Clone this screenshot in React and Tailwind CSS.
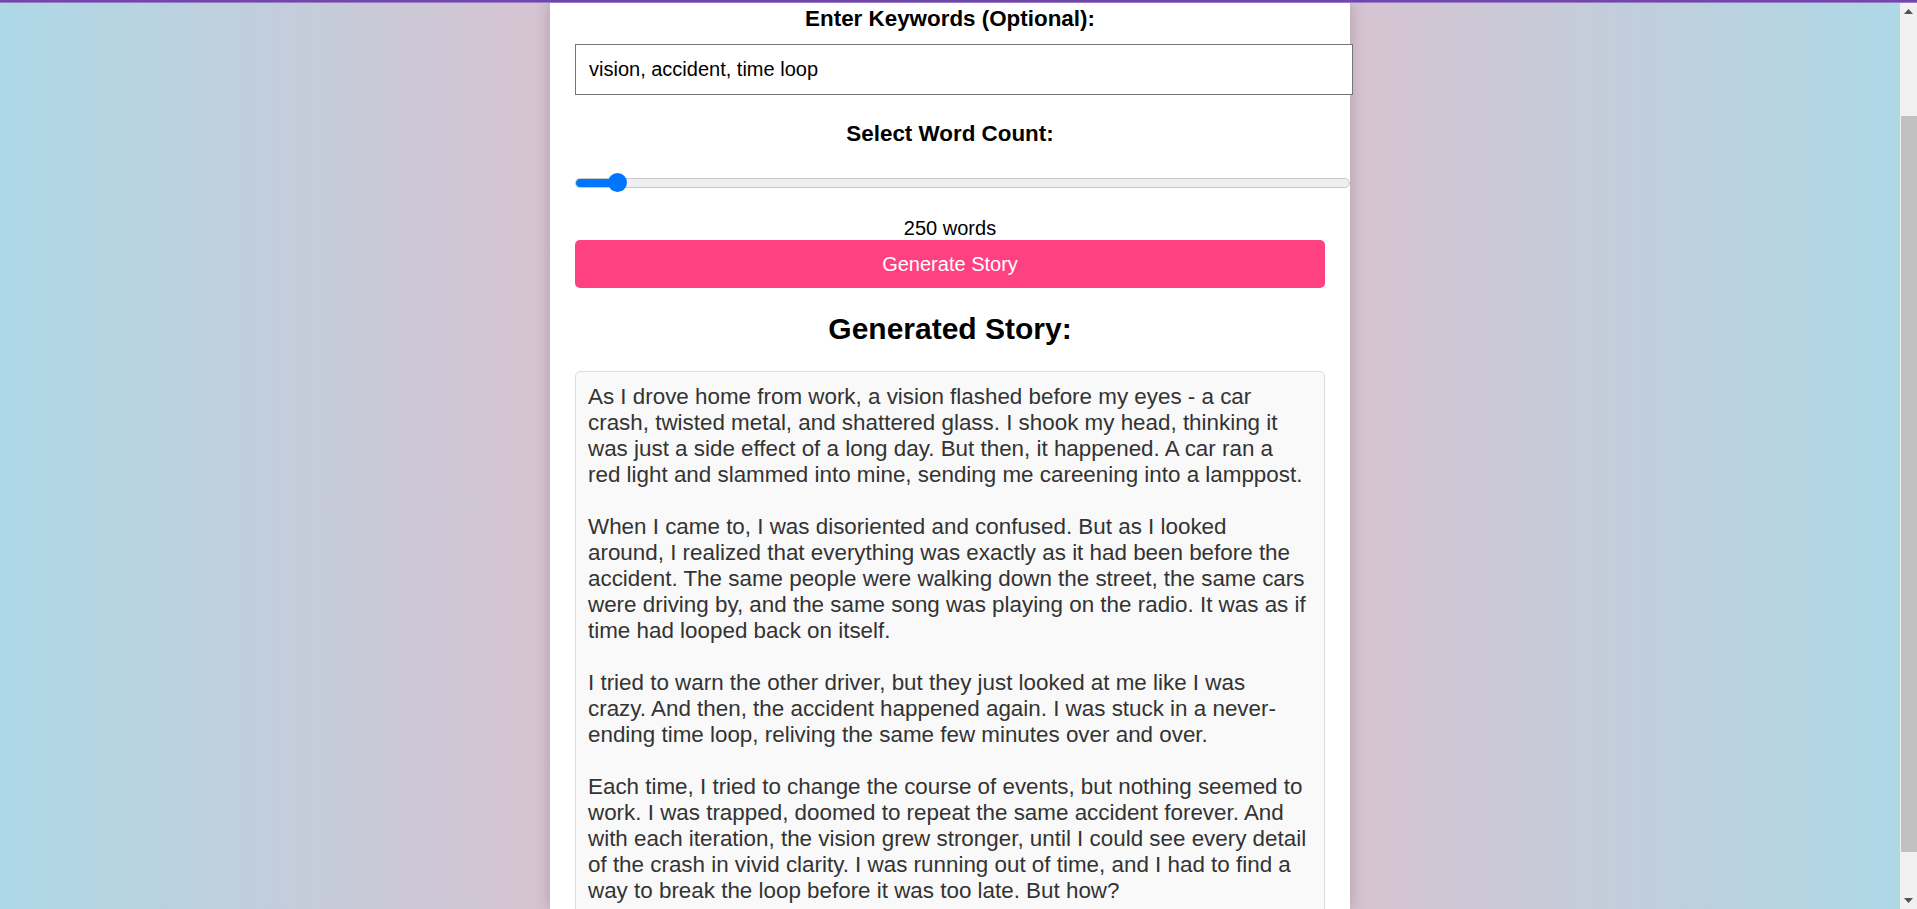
import { useState } from "react";

// story lines, broken the way the reference wraps them
const STORY = [
  "As I drove home from work, a vision flashed before my eyes - a car",
  "crash, twisted metal, and shattered glass. I shook my head, thinking it",
  "was just a side effect of a long day. But then, it happened. A car ran a",
  "red light and slammed into mine, sending me careening into a lamppost.",
  "",
  "When I came to, I was disoriented and confused. But as I looked",
  "around, I realized that everything was exactly as it had been before the",
  "accident. The same people were walking down the street, the same cars",
  "were driving by, and the same song was playing on the radio. It was as if",
  "time had looped back on itself.",
  "",
  "I tried to warn the other driver, but they just looked at me like I was",
  "crazy. And then, the accident happened again. I was stuck in a never-",
  "ending time loop, reliving the same few minutes over and over.",
  "",
  "Each time, I tried to change the course of events, but nothing seemed to",
  "work. I was trapped, doomed to repeat the same accident forever. And",
  "with each iteration, the vision grew stronger, until I could see every detail",
  "of the crash in vivid clarity. I was running out of time, and I had to find a",
  "way to break the loop before it was too late. But how?",
  "",
  "Then it hit me. The vision wasn't a warning, it was a map.",
];

const MIN = 100;
const MAX = 3600;
const SLIDER_W = 775;
const THUMB = 19;

function Scrollbar() {
  return (
    <div className="w-[17px] shrink-0 bg-[#f1f1f1] flex flex-col">
      <div className="h-[17px] flex items-center justify-center">
        <svg width="9" height="5" viewBox="0 0 9 5">
          <polygon points="0,5 4.5,0 9,5" fill="#505050" />
        </svg>
      </div>
      <div className="h-[96px]" />
      <div className="h-[736px] ml-[1px] bg-[#c1c1c1]" />
      <div className="flex-1" />
      <div className="h-[17px] flex items-center justify-center">
        <svg width="9" height="5" viewBox="0 0 9 5">
          <polygon points="0,0 9,0 4.5,5" fill="#505050" />
        </svg>
      </div>
    </div>
  );
}

export default function App() {
  const [keywords, setKeywords] = useState("vision, accident, time loop");
  const [count, setCount] = useState(250);

  const frac = (count - MIN) / (MAX - MIN);
  const fill = THUMB / 2 + (SLIDER_W - THUMB) * frac;

  return (
    <div className="h-screen w-full overflow-hidden flex flex-col font-['Liberation_Sans',Arial,sans-serif] text-[20px] text-black">
      <div className="h-[3px] shrink-0 bg-[#7148aa] border-b border-[#9a7cc6]" />
      <div className="flex flex-1 min-h-0">
        <main className="flex-1 flex justify-center overflow-hidden bg-[linear-gradient(to_right,#add8e6,#f6b4c2,#add8e6)]">
          <div className="w-[800px] bg-white px-[25px] shadow-[0_0_15px_rgba(0,0,0,0.2)] flex flex-col">
            <label className="mt-[3px] self-center text-[22.4px] font-bold leading-[normal]">
              Enter Keywords (Optional):
            </label>
            <input
              type="text"
              value={keywords}
              onChange={e => setKeywords(e.target.value)}
              className="mt-[12px] w-[778px] h-[51px] shrink-0 px-[13px] border border-[#767676] bg-white text-[20px] leading-[normal] outline-none"
            />
            <label className="mt-[26px] self-center text-[22.4px] font-bold leading-[normal]">
              Select Word Count:
            </label>
            <input
              type="range"
              min={MIN}
              max={MAX}
              step={50}
              value={count}
              onChange={e => setCount(Number(e.target.value))}
              style={{ "--fill": `${fill}px` }}
              className="mt-[26px] w-[775px] h-[19px] shrink-0 block appearance-none bg-transparent outline-none cursor-pointer
                [&::-webkit-slider-runnable-track]:h-[10px] [&::-webkit-slider-runnable-track]:rounded-full
                [&::-webkit-slider-runnable-track]:border [&::-webkit-slider-runnable-track]:border-[#c9c9c9]
                [&::-webkit-slider-runnable-track]:bg-[linear-gradient(to_right,#0075ff_var(--fill),#efefef_var(--fill))]
                [&::-webkit-slider-thumb]:appearance-none [&::-webkit-slider-thumb]:w-[19px] [&::-webkit-slider-thumb]:h-[19px]
                [&::-webkit-slider-thumb]:mt-[-5.5px] [&::-webkit-slider-thumb]:rounded-full [&::-webkit-slider-thumb]:bg-[#0075ff]"
            />
            <p className="mt-[25px] self-center leading-[normal]">{count} words</p>
            <button className="h-[48px] shrink-0 w-full rounded-[5px] bg-[#ff4081] text-white text-[20px] leading-[normal]">
              Generate Story
            </button>
            <h2 className="mt-[24px] self-center text-[30px] font-bold leading-[normal]">Generated Story:</h2>
            <div className="mt-[25px] border border-[#dddddd] rounded-[5px] bg-[#f9f9f9] p-[12px] text-[22.4px] leading-[26px] text-[#333333]">
              {STORY.map((line, i) => (
                <div key={i} className="h-[26px] whitespace-nowrap">
                  {line}
                </div>
              ))}
            </div>
          </div>
        </main>
        <Scrollbar />
      </div>
    </div>
  );
}
